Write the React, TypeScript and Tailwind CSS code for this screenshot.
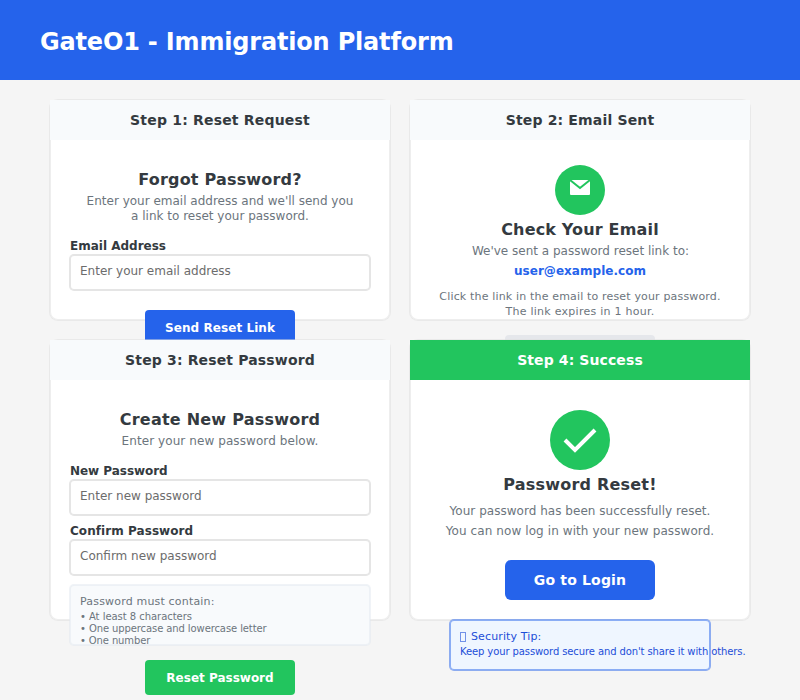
import React from "react";

type CardProps = {
  title: string;
  heightClass: string;
  titleClass: string;
  success?: boolean;
  children: React.ReactNode;
};

function Card({ title, heightClass, titleClass, success, children }: CardProps) {
  return (
    <section
      className={`relative w-[340px] rounded-[8px] bg-white shadow-[0_0_0_1px_rgba(221,221,221,0.5),inset_0_0_0_1px_rgba(221,221,221,0.5)] ${heightClass}`}
    >
      <h2
        className={`h-10 text-center text-sm leading-[40px] font-bold ${titleClass} ${
          success ? "bg-[#22c55e] text-white" : "bg-[#f8fafc] text-[#343a40]"
        }`}
      >
        {title}
      </h2>
      <div className="flex flex-col items-center px-5">{children}</div>
    </section>
  );
}

function Heading({ children, className }: { children: React.ReactNode; className: string }) {
  return <h3 className={`text-base leading-5 font-bold text-[#343a40] ${className}`}>{children}</h3>;
}

type FieldProps = { label: string; placeholder: string; className: string; labelClass?: string };

function Field({ label, placeholder, className, labelClass = "" }: FieldProps) {
  return (
    <label className={`block w-full ${className}`}>
      <span className={`block text-xs leading-[15px] font-bold text-[#343a40] ${labelClass}`}>{label}</span>
      <span className="mt-px block h-[35px] rounded-[4px] bg-white px-2.5 pt-[9px] text-xs leading-[15px] text-[#6c6c6c] shadow-[0_0_0_1px_rgba(204,204,204,0.5),inset_0_0_0_1px_rgba(204,204,204,0.5)]">
        {placeholder}
      </span>
    </label>
  );
}

function SmallButton({ children, className }: { children?: React.ReactNode; className: string }) {
  return (
    <button className={`block h-[35px] w-[150px] rounded-[4px] text-center text-xs leading-[36px] font-bold ${className}`}>
      {children}
    </button>
  );
}

export default function App() {
  return (
    <div className="h-[700px] w-[800px] overflow-hidden bg-[#f5f5f5] font-['DejaVu_Sans',sans-serif]">
      <header className="h-20 bg-[#2563eb] px-10 pt-1">
        <h1 className="text-2xl leading-[76px] font-bold tracking-[-0.18px] text-white">
          GateO1 - Immigration Platform
        </h1>
      </header>

      <main className="grid grid-cols-[340px_340px] gap-5 px-[50px] pt-5">
        <Card title="Step 1: Reset Request" heightClass="h-[220px]" titleClass="tracking-[0.19px]">
          <Heading className="mt-[30px] tracking-[0.19px]">Forgot Password?</Heading>
          <p className="mt-1 text-center text-xs leading-[15px] text-[#6c757d]">
            Enter your email address and we'll send you
            <br />a link to reset your password.
          </p>
          <Field className="mt-[15px]" label="Email Address" placeholder="Enter your email address" />
          <SmallButton className="mt-5 bg-[#2563eb] tracking-[0.07px] text-white">Send Reset Link</SmallButton>
        </Card>

        <Card title="Step 2: Email Sent" heightClass="h-[220px]" titleClass="tracking-[0.17px]">
          <svg className="mt-[25px] h-[50px] w-[50px]" viewBox="0 0 50 50" fill="none">
            <circle cx="25" cy="25" r="25" fill="#22c55e" />
            <rect x="15" y="15" width="20" height="15" rx="1" fill="#fff" />
            <path d="M15 15L25 23L35 15" stroke="#22c55e" strokeWidth="2" />
          </svg>
          <Heading className="mt-[5px] tracking-[0.16px]">Check Your Email</Heading>
          <p className="mt-1 pl-px text-xs leading-[15px] text-[#6c757d]">We've sent a password reset link to:</p>
          <p className="mt-[5px] text-xs leading-[15px] font-bold tracking-[0.04px] text-[#2563eb]">user@example.com</p>
          <p className="mt-2.5 text-center text-[11px] leading-[15px] tracking-[0.163px] whitespace-nowrap text-[#6c757d]">
            Click the link in the email to reset your password.
            <br />
            <span className="tracking-[0.26px]">The link expires in 1 hour.</span>
          </p>
          <SmallButton className="mt-4 bg-[#e5e7eb]" />
        </Card>

        <Card title="Step 3: Reset Password" heightClass="h-[280px]" titleClass="tracking-[0.15px]">
          <Heading className="mt-[30px] tracking-[0.23px]">Create New Password</Heading>
          <p className="mt-1 text-xs leading-[15px] tracking-[0.08px] text-[#6c757d]">Enter your new password below.</p>
          <Field
            className="mt-[15px]"
            labelClass="tracking-[-0.04px]"
            label="New Password"
            placeholder="Enter new password"
          />
          <Field
            className="mt-[9px]"
            labelClass="tracking-[0.06px]"
            label="Confirm Password"
            placeholder="Confirm new password"
          />
          <div className="mt-2.5 h-[60px] w-full shrink-0 rounded-[4px] bg-[#f8fafc] px-2.5 pt-[9px] text-[#6c757d] shadow-[0_0_0_1px_rgba(226,232,240,0.5),inset_0_0_0_1px_rgba(226,232,240,0.5)]">
            <p className="text-[11px] leading-[15px] tracking-[0.18px]">Password must contain:</p>
            <ul className="mt-0.5 text-[10px] leading-3">
              <li className="tracking-[-0.04px]">• At least 8 characters</li>
              <li className="tracking-[-0.1px]">• One uppercase and lowercase letter</li>
              <li className="tracking-[-0.12px]">• One number</li>
            </ul>
          </div>
          <SmallButton className="mt-[15px] bg-[#22c55e] text-white">Reset Password</SmallButton>
        </Card>

        <Card title="Step 4: Success" heightClass="h-[280px]" titleClass="tracking-[0.1px]" success>
          <svg className="mt-[30px] h-[60px] w-[60px]" viewBox="0 0 60 60" fill="none">
            <circle cx="30" cy="30" r="30" fill="#22c55e" />
            <path d="M15 30L25 40L45 20" stroke="#fff" strokeWidth="4" />
          </svg>
          <Heading className="mt-[5px] tracking-[0.2px]">Password Reset!</Heading>
          <p className="mt-1.5 text-center text-xs leading-5 text-[#6c757d]">
            <span className="tracking-[0.03px]">Your password has been successfully reset.</span>
            <br />
            <span className="tracking-[0.09px] whitespace-nowrap">You can now log in with your new password.</span>
          </p>
          <button className="mt-[19px] block h-10 w-[150px] rounded-[6px] bg-[#2563eb] text-center text-sm leading-[40px] font-bold tracking-[0.17px] text-white">
            Go to Login
          </button>
          <aside className="mt-5 h-[50px] w-[260px] rounded-[4px] bg-[#eff6ff] px-2.5 pt-[9px] whitespace-nowrap text-[#1d4ed8] shadow-[0_0_0_1px_rgba(37,99,235,0.5),inset_0_0_0_1px_rgba(37,99,235,0.5)]">
            <p className="flex items-start text-[11px] leading-[15px] tracking-[0.12px]">
              <span className="mt-[3px] mr-[5px] h-[10px] w-[6px] border border-[#1d4ed8]/60" />
              Security Tip:
            </p>
            <p className="mt-0.5 text-[10px] leading-3 tracking-[-0.105px]">
              Keep your password secure and don't share it with others.
            </p>
          </aside>
        </Card>
      </main>
    </div>
  );
}
